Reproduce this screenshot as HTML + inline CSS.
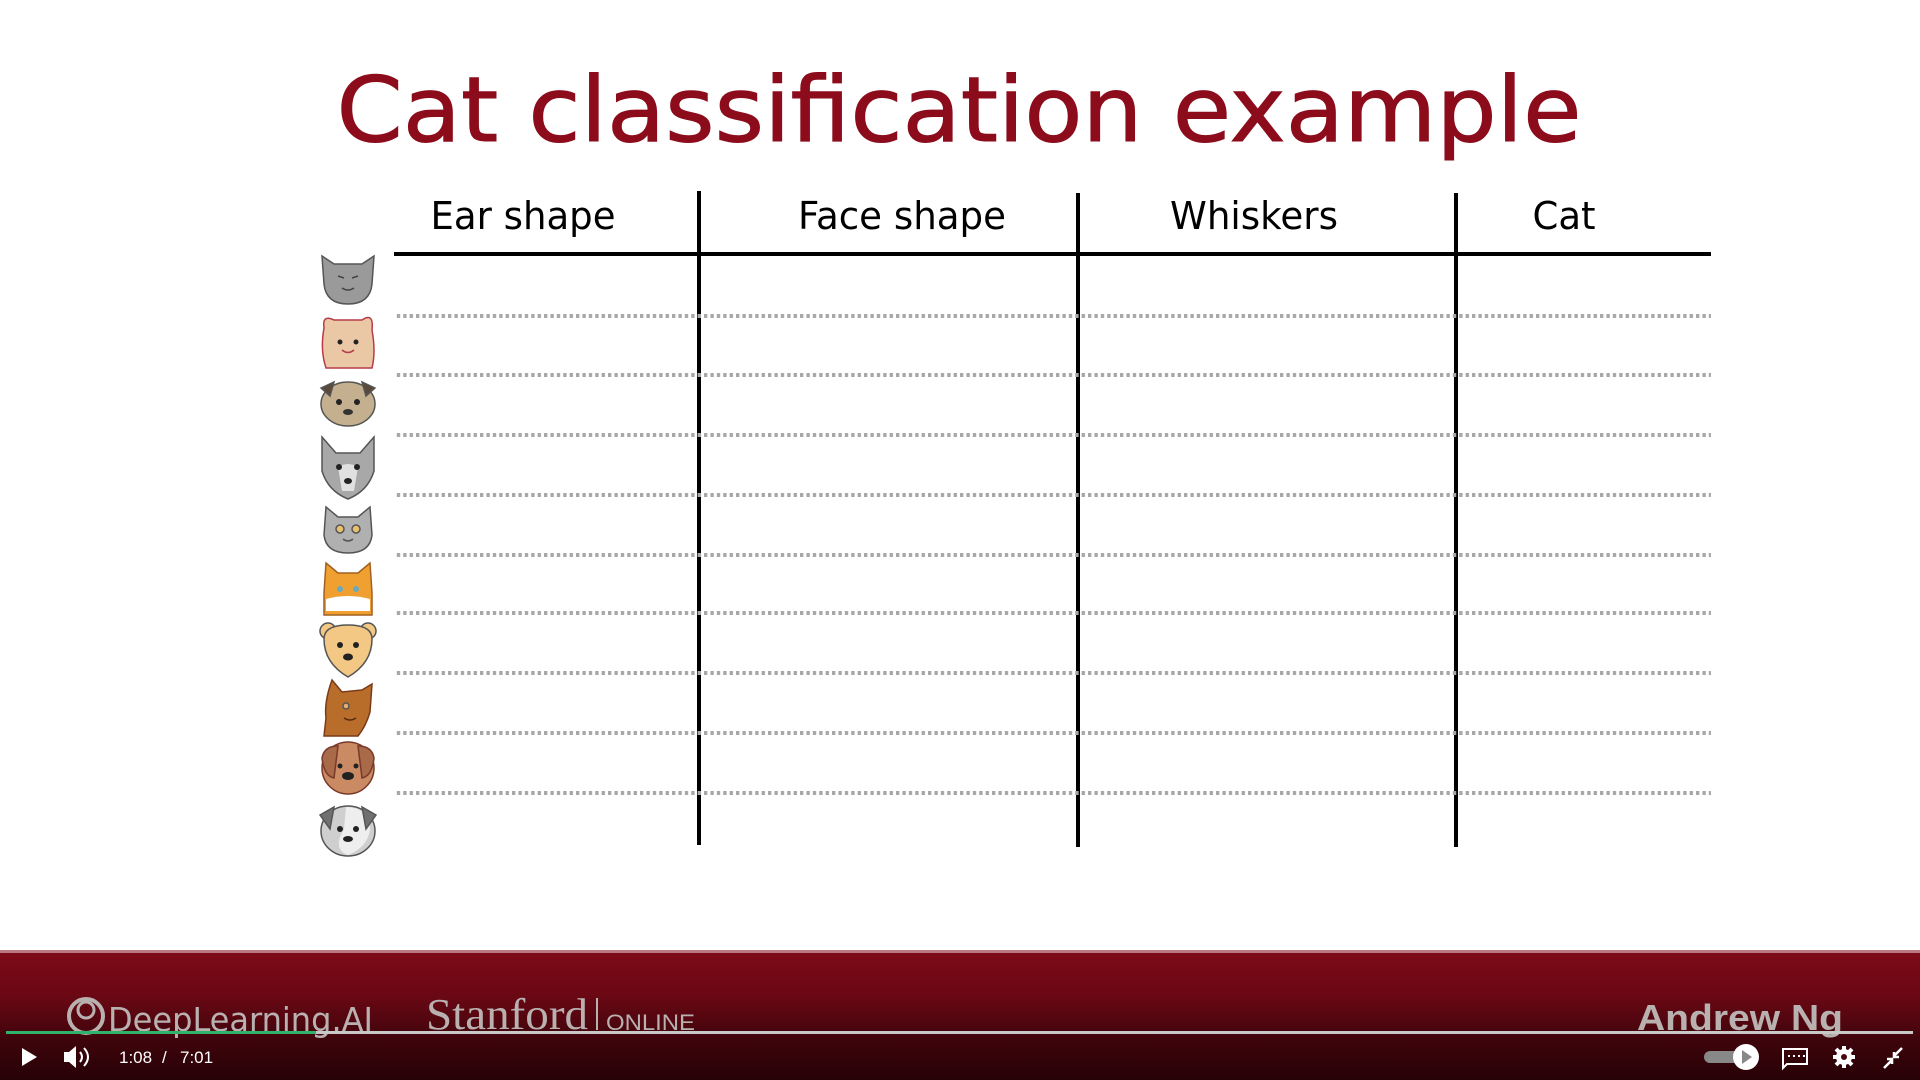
<!DOCTYPE html>
<html><head><meta charset="utf-8"><style>
html,body{margin:0;padding:0;width:1920px;height:1080px;overflow:hidden;background:#fff;font-family:"DejaVu Sans","Liberation Sans",sans-serif}
.abs{position:absolute}
</style></head><body>
<svg class="abs" style="left:0;top:0" width="1920" height="1080" viewBox="0 0 1920 1080">
<defs>
<linearGradient id="bar" x1="0" y1="0" x2="0" y2="1">
<stop offset="0" stop-color="#7f0a18"/><stop offset="0.35" stop-color="#6a0814"/><stop offset="0.7" stop-color="#3e040b"/><stop offset="1" stop-color="#260206"/>
</linearGradient>
<pattern id="dots" width="6.4" height="4" patternUnits="userSpaceOnUse"><rect width="3.4" height="4" fill="#a8a8a8"/></pattern>
</defs>
<text x="959" y="141" font-family="DejaVu Sans" font-size="90" fill="#8c0c1c" stroke="#8c0c1c" stroke-width="1" text-anchor="middle" textLength="1245" lengthAdjust="spacingAndGlyphs">Cat classification example</text>
<g font-family="DejaVu Sans" font-size="38" fill="#000" text-anchor="middle">
<text x="523" y="229" textLength="185" lengthAdjust="spacingAndGlyphs">Ear shape</text>
<text x="902" y="229" textLength="208" lengthAdjust="spacingAndGlyphs">Face shape</text>
<text x="1254" y="229" textLength="168" lengthAdjust="spacingAndGlyphs">Whiskers</text>
<text x="1564" y="229" textLength="63" lengthAdjust="spacingAndGlyphs">Cat</text>
</g>
<rect x="394" y="252" width="1317" height="4" fill="#000"/>
<rect x="697" y="191" width="4" height="654" fill="#000"/>
<rect x="1076" y="193" width="4" height="654" fill="#000"/>
<rect x="1454" y="193" width="4" height="654" fill="#000"/>
<g fill="url(#dots)">
<rect x="394" y="314" width="1317" height="4"/><rect x="394" y="373" width="1317" height="4"/>
<rect x="394" y="433" width="1317" height="4"/><rect x="394" y="493" width="1317" height="4"/>
<rect x="394" y="553" width="1317" height="4"/><rect x="394" y="611" width="1317" height="4"/>
<rect x="394" y="671" width="1317" height="4"/><rect x="394" y="731" width="1317" height="4"/>
<rect x="394" y="791" width="1317" height="4"/>
</g>
<g stroke="#555" stroke-width="1.5">
<g transform="translate(348,278)"><path d="M-26,-22 L-14,-14 L14,-14 L26,-22 L24,6 Q22,26 0,26 Q-22,26 -24,6 Z" fill="#9a9a9a"/><path d="M-10,-2 l6,2 M10,-2 l-6,2 M-6,10 q6,4 12,0" stroke="#444" fill="none"/></g>
<g transform="translate(348,342)"><path d="M-24,-14 Q-26,-28 -14,-22 L14,-22 Q26,-30 24,-12 Q28,10 24,26 L-22,26 Q-28,8 -24,-14Z" fill="#eac8a6" stroke="#b83a4a"/><circle cx="-8" cy="0" r="2.5" fill="#222" stroke="none"/><circle cx="8" cy="0" r="2.5" fill="#222" stroke="none"/><path d="M-6,8 q6,5 12,0" fill="none" stroke="#b83a4a"/></g>
<g transform="translate(348,402)"><ellipse cx="0" cy="2" rx="27" ry="22" fill="#c4b08e"/><path d="M-27,-14 L-14,-20 L-18,-6Z M27,-14 L14,-20 L18,-6Z" fill="#5a4a3a"/><circle cx="-9" cy="0" r="3" fill="#222" stroke="none"/><circle cx="9" cy="0" r="3" fill="#222" stroke="none"/><ellipse cx="0" cy="10" rx="5" ry="3" fill="#333" stroke="none"/></g>
<g transform="translate(348,467)"><path d="M-26,-30 L-12,-14 L12,-14 L26,-30 L26,4 Q20,24 0,32 Q-20,24 -26,4Z" fill="#a8a8a8"/><path d="M-10,0 Q0,-6 10,0 L6,24 L-6,24Z" fill="#e0e0e0" stroke="none"/><circle cx="-9" cy="0" r="3" fill="#222" stroke="none"/><circle cx="9" cy="0" r="3" fill="#222" stroke="none"/><ellipse cx="0" cy="14" rx="4" ry="3" fill="#222" stroke="none"/></g>
<g transform="translate(348,529)"><path d="M-22,-22 L-10,-12 L10,-12 L22,-22 L24,6 Q22,24 0,24 Q-22,24 -24,6Z" fill="#b0b0b0"/><circle cx="-8" cy="0" r="4" fill="#e8c070"/><circle cx="8" cy="0" r="4" fill="#e8c070"/><path d="M-5,10 q5,4 10,0" fill="none"/></g>
<g transform="translate(348,589)"><path d="M-22,-26 L-10,-16 L10,-16 L22,-26 L24,4 L24,26 L-24,26 L-24,4Z" fill="#f0a030" stroke="#a06020"/><path d="M-22,10 Q0,4 22,10 L22,22 L-22,22Z" fill="#fff" stroke="none"/><circle cx="-8" cy="0" r="3" fill="#6ab" stroke="none"/><circle cx="8" cy="0" r="3" fill="#6ab" stroke="none"/></g>
<g transform="translate(348,649)"><circle cx="-20" cy="-18" r="8" fill="#f2c884"/><circle cx="20" cy="-18" r="8" fill="#f2c884"/><path d="M-24,-10 Q-24,-24 0,-24 Q24,-24 24,-10 Q24,14 0,28 Q-24,14 -24,-10Z" fill="#f2c884"/><circle cx="-8" cy="-4" r="3" fill="#222" stroke="none"/><circle cx="8" cy="-4" r="3" fill="#222" stroke="none"/><ellipse cx="0" cy="8" rx="5" ry="3.5" fill="#222" stroke="none"/></g>
<g transform="translate(348,708)"><path d="M-16,-28 L-6,-16 L14,-18 L24,-24 L22,4 Q18,18 10,28 L-24,28 L-22,10 Q-24,-6 -16,-28Z" fill="#b86e2a" stroke="#7a3a1a"/><circle cx="-2" cy="-2" r="3" fill="#e8b070"/><path d="M-4,10 q6,4 12,0" fill="none" stroke="#5a2a10"/></g>
<g transform="translate(348,768)"><ellipse cx="0" cy="0" rx="26" ry="26" fill="#c98a64" stroke="#7a3a2a"/><path d="M-26,-10 Q-24,-22 -10,-22 L-14,10 Q-24,8 -26,-10Z M26,-10 Q24,-22 10,-22 L14,10 Q24,8 26,-10Z" fill="#a86a48" stroke="#7a3a2a"/><circle cx="-8" cy="-2" r="2.5" fill="#222" stroke="none"/><circle cx="8" cy="-2" r="2.5" fill="#222" stroke="none"/><ellipse cx="0" cy="8" rx="6" ry="4" fill="#222" stroke="none"/></g>
<g transform="translate(348,829)"><ellipse cx="0" cy="2" rx="27" ry="25" fill="#cfcfcf"/><path d="M-2,-22 Q20,-22 22,0 Q20,18 0,26 Q-16,20 -4,0Z" fill="#eee" stroke="none"/><path d="M-28,-14 L-14,-22 L-18,0Z M28,-14 L14,-22 L18,0Z" fill="#707070"/><circle cx="-8" cy="0" r="3" fill="#222" stroke="none"/><circle cx="8" cy="0" r="3" fill="#222" stroke="none"/><ellipse cx="0" cy="10" rx="5" ry="3" fill="#222" stroke="none"/></g>
</g>
<rect x="0" y="950" width="1920" height="130" fill="url(#bar)"/>
<rect x="0" y="950" width="1920" height="3" fill="#b87a80"/>
<g fill="#b9b0b0">
<circle cx="86" cy="1016" r="17" fill="none" stroke="#b9b0b0" stroke-width="4"/><circle cx="86" cy="1010" r="8" fill="none" stroke="#b9b0b0" stroke-width="3"/>
<text x="108" y="1031" font-family="DejaVu Sans Condensed,DejaVu Sans" font-size="33" textLength="265" lengthAdjust="spacingAndGlyphs">DeepLearning.AI</text>
<text x="426" y="1029" font-family="Liberation Serif" font-size="44" textLength="162" lengthAdjust="spacingAndGlyphs">Stanford</text>
<rect x="596" y="998" width="2" height="32"/>
<text x="606" y="1030" font-family="Liberation Sans" font-size="22" textLength="89" lengthAdjust="spacingAndGlyphs">ONLINE</text>
<text x="1637" y="1030" font-family="Liberation Sans" font-weight="bold" font-size="36" textLength="206" lengthAdjust="spacingAndGlyphs">Andrew Ng</text>
</g>
<rect x="6" y="1031" width="1907" height="3" fill="#c8c8c8"/>
<rect x="6" y="1031" width="310" height="3" fill="#2fb36a"/>
<path d="M22,1048 L22,1066 L37,1057Z" fill="#fff"/>
<path d="M64,1052 h5 l7,-6 v22 l-7,-6 h-5z" fill="#fff"/>
<path d="M80,1052 q4,5 0,10 M84,1048 q8,9 0,18" stroke="#fff" stroke-width="2" fill="none"/>
<g font-family="Liberation Sans" font-size="17" fill="#fff"><text x="119" y="1063">1:08</text><text x="162" y="1063">/</text><text x="180" y="1063">7:01</text></g>
<rect x="1704" y="1051" width="50" height="12" rx="6" fill="#888"/>
<circle cx="1746" cy="1057" r="13" fill="#fff"/><path d="M1742,1050 L1742,1064 L1752,1057Z" fill="#888"/>
<path d="M1783,1049 h24 v15 h-20 l-4,4 z" fill="none" stroke="#fff" stroke-width="2"/>
<g fill="#fff"><rect x="1788" y="1055" width="2" height="2"/><rect x="1793" y="1055" width="2" height="2"/><rect x="1798" y="1055" width="2" height="2"/><rect x="1803" y="1055" width="2" height="2"/></g>
<g transform="translate(1844,1057)"><circle r="8" fill="#fff"/><g stroke="#fff" stroke-width="4"><path d="M0,-11 V11 M-11,0 H11 M-8,-8 L8,8 M8,-8 L-8,8"/></g><circle r="3" fill="#4a0510"/></g>
<path d="M1884,1068 l8,-8 M1887,1059 h5 v5 M1902,1048 l-8,8 M1899,1057 h-5 v-5" stroke="#fff" stroke-width="2.5" fill="none"/>
</svg>
</body></html>
